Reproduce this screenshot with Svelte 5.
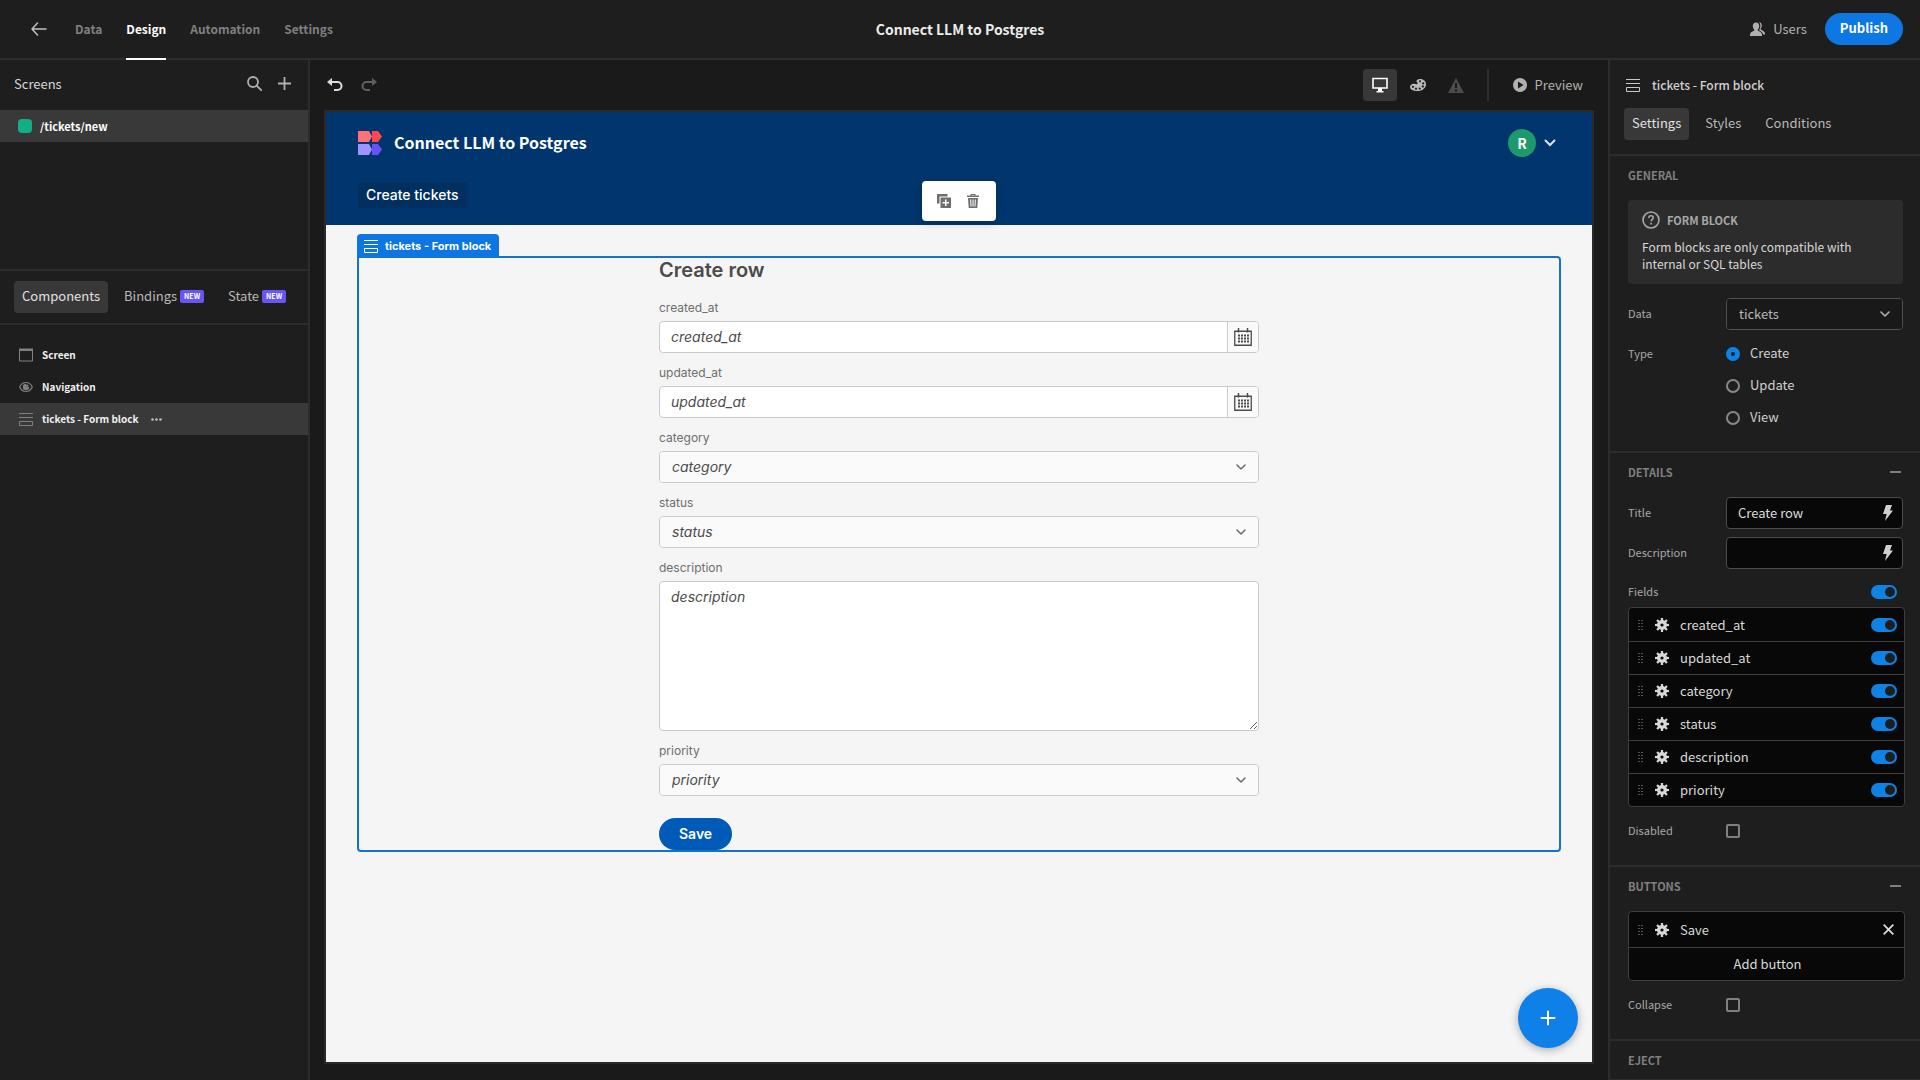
<script>
  const topTabs = ['Data', 'Design', 'Automation', 'Settings'];
  const settingTabs = ['Settings', 'Styles', 'Conditions'];
  const types = ['Create', 'Update', 'View'];
  const fields = ['created_at', 'updated_at', 'category', 'status', 'description', 'priority'];
  const formFields = [
    { name: 'created_at', kind: 'date' },
    { name: 'updated_at', kind: 'date' },
    { name: 'category', kind: 'select' },
    { name: 'status', kind: 'select' },
    { name: 'description', kind: 'long' },
    { name: 'priority', kind: 'select' }
  ];
  const teeth = [0, 45, 90, 135, 180, 225, 270, 315];
  const dotRows = [1, 4, 7, 10];

  let activeTop = $state('Design');
  let activeSetting = $state('Settings');
  let type = $state('Create');
  let title = $state('Create row');
  let enabled = $state(fields.map(() => true));
  let allEnabled = $state(true);
</script>

{#snippet formIcon()}
  <svg class="i14" viewBox="0 0 14 14" aria-hidden="true">
    <path d="M0 1.500h14M0 5.500h14M.5 9.500h13v4H.5z" fill="none" stroke="currentColor" />
  </svg>
{/snippet}

{#snippet gear()}
  <svg class="i14" viewBox="0 0 14 14" aria-hidden="true">
    <circle cx="7" cy="7" r="3.300" fill="none" stroke="currentColor" stroke-width="3.400" />
    {#each teeth as angle}
      <rect x="5.900" y="0" width="2.200" height="3" fill="currentColor" transform="rotate({angle} 7 7)" />
    {/each}
  </svg>
{/snippet}

{#snippet grip()}
  <svg class="grip" width="6" height="12" viewBox="0 0 6 12" aria-hidden="true">
    {#each dotRows as y}
      <rect x="0" {y} width="2" height="1" /><rect x="3" {y} width="2" height="1" />
    {/each}
  </svg>
{/snippet}

{#snippet chevron()}
  <svg class="chevron" width="10" height="7" viewBox="0 0 10 7" aria-hidden="true">
    <path d="M1 1l4 4 4-4" fill="none" stroke="currentColor" stroke-width="1.600" stroke-linecap="round" stroke-linejoin="round" />
  </svg>
{/snippet}

{#snippet bolt()}
  <svg width="10" height="16" viewBox="0 0 10 16" aria-hidden="true">
    <path d="M3 0h6L7 5.600h3L2 16l1.600-7H0z" fill="currentColor" />
  </svg>
{/snippet}

<div class="app">
  <header class="top">
    <nav class="top-nav" aria-label="Sections">
      <button class="back" aria-label="Back">
        <svg width="16" height="14" viewBox="0 0 16 14" fill="none" stroke="currentColor" stroke-width="1.500" stroke-linecap="round" stroke-linejoin="round"><path d="M6.500 1L1 7l5.500 6M1 7h14" /></svg>
      </button>
      {#each topTabs as tab}
        <button class="top-tab" class:active={activeTop === tab} onclick={() => (activeTop = tab)}>{tab}</button>
      {/each}
    </nav>
    <h1>Connect LLM to Postgres</h1>
    <div class="top-actions">
      <button class="users">
        <svg width="15" height="14" viewBox="0 0 15 14" fill="currentColor" aria-hidden="true">
          <path d="M6 .5c2.200 0 3.200 1.600 3.200 3.500 0 1.500-.6 2.700-1.400 3.500v1.200c1.600.5 4 1.700 4.200 3.600V14H0v-1.700c.2-1.900 2.600-3.100 4.200-3.600V7.500C3.400 6.700 2.800 5.500 2.800 4 2.800 2.100 3.800.5 6 .5z" />
          <path d="M9 0c1.900.2 2.800 1.700 2.800 3.400 0 1.300-.5 2.400-1.100 3.100v1C12 8 14 9 15 11v1.500h-1.700c-.6-2-2.200-3.200-4-4V7.600c.7-1 1.100-2.200 1.100-3.600C10.400 2.300 9.900.9 9 0z" />
        </svg>
        Users
      </button>
      <button class="publish">Publish</button>
    </div>
  </header>

  <div class="body">
    <aside class="left">
      <section class="screens">
        <div class="screens-head">
          <h2>Screens</h2>
          <button class="icon" aria-label="Search">
            <svg width="15" height="15" viewBox="0 0 15 15" fill="none" stroke="currentColor" stroke-width="1.800"><circle cx="6" cy="6" r="5" /><path d="M9.600 9.600l4.600 4.600" stroke-linecap="round" /></svg>
          </button>
          <button class="icon" aria-label="Add screen">
            <svg width="13" height="13" viewBox="0 0 13 13" stroke="currentColor" stroke-width="1.800"><path d="M6.500 0v13M0 6.500h13" /></svg>
          </button>
        </div>
        <a class="screen-row" href="#tickets-new"><span class="swatch"></span>/tickets/new</a>
      </section>
      <div class="left-tabs">
        <button class="pill active">Components</button>
        <button class="pill">Bindings <span class="new">NEW</span></button>
        <button class="pill">State <span class="new">NEW</span></button>
      </div>
      <ul class="tree">
        <li>
          <svg class="i14" viewBox="0 0 14 14" aria-hidden="true"><path d="M.5 1.500h13v11.500H.5z" fill="none" stroke="currentColor" /><path d="M0 .5h14v2.500H0z" fill="currentColor" /></svg>
          Screen
        </li>
        <li>
          <svg class="i14" viewBox="0 0 14 14" aria-hidden="true"><path d="M.7 7C2 4 4.200 2.500 7 2.500S12 4 13.300 7C12 10 9.800 11.500 7 11.500S2 10 .7 7z" fill="none" stroke="currentColor" stroke-width="1.200" /><path d="M7 3.800a3.200 3.200 0 1 0 3.200 3.200H7z" fill="currentColor" /><circle cx="8.200" cy="5.800" r="1.300" fill="currentColor" /></svg>
          Navigation
        </li>
        <li class="selected">
          {@render formIcon()}
          tickets - Form block
          <button class="more" aria-label="More actions"><svg width="11" height="3" viewBox="0 0 11 3" fill="currentColor"><circle cx="1.500" cy="1.500" r="1.300" /><circle cx="5.500" cy="1.500" r="1.300" /><circle cx="9.500" cy="1.500" r="1.300" /></svg></button>
        </li>
      </ul>
    </aside>

    <main class="center">
      <div class="toolbar">
        <button class="icon bright" aria-label="Undo">
          <svg width="16" height="14" viewBox="0 0 16 14"><path d="M4 4h6.500a4 4 0 0 1 0 8H7" fill="none" stroke="currentColor" stroke-width="2" /><path d="M5 0v8L0 4z" fill="currentColor" /></svg>
        </button>
        <button class="icon dim" aria-label="Redo">
          <svg width="16" height="14" viewBox="0 0 16 14"><path d="M12 4H5.500a4 4 0 0 0 0 8H9" fill="none" stroke="currentColor" stroke-width="2" /><path d="M11 0v8l5-4z" fill="currentColor" /></svg>
        </button>
        <span class="grow"></span>
        <button class="tool active" aria-label="Desktop view">
          <svg width="16" height="16" viewBox="0 0 16 16"><path d="M1 1.500h14v9.500H1z" fill="none" stroke="currentColor" stroke-width="1.600" /><path d="M6 11h4v3h1.500v1.500h-7V14H6z" fill="currentColor" /></svg>
        </button>
        <button class="tool" aria-label="Theme">
          <svg width="16" height="12" viewBox="0 0 16 12"><path fill="currentColor" fill-rule="evenodd" d="M6.500 1.800C7 .6 8.500 0 10.300 0 13.600 0 16 2.300 16 5.200 16 9 12.300 12 7.800 12 3.300 12 0 10.400 0 7.900 0 6 1.700 4.700 3.800 4.700c1.600 0 2.400.8 3.400.4 1-.4.3-1.400-.2-1.900-.4-.4-.7-.9-.5-1.400zM10 1.300a1 1 0 1 0 .01 0zM13.200 3.200a1.100 1.100 0 1 0 .01 0zM12.800 6.300a1.100 1.100 0 1 0 .01 0zM9.700 8.400a1.100 1.100 0 1 0 .01 0zM6 8.600a1.100 1.100 0 1 0 .01 0zM2.900 6.700a1.100 1.100 0 1 0 .01 0z" /></svg>
        </button>
        <button class="tool faint" aria-label="Errors">
          <svg width="16" height="15" viewBox="0 0 16 15"><path fill="currentColor" fill-rule="evenodd" d="M8 0l8 15H0zM7 5v5h2V5zM7 11.500v2h2v-2z" /></svg>
        </button>
        <span class="rule"></span>
        <button class="preview">
          <svg width="14" height="14" viewBox="0 0 14 14" aria-hidden="true"><path fill="currentColor" fill-rule="evenodd" d="M7 0a7 7 0 1 0 .01 0zM5 3.500v7L10.500 7z" /></svg>
          Preview
        </button>
      </div>

      <div class="canvas">
        <header class="app-head">
          <div class="brand">
            <svg width="24" height="24" viewBox="0 0 24 24" aria-hidden="true">
              <path d="M0 0h11l3 5.500L11 11H0z" fill="#ff7178" /><path d="M14 0h6l4 5.500-4 5.500h-6z" fill="#ff4751" />
              <path d="M0 13h11l3 5.500L11 24H0z" fill="#9f93ff" /><path d="M14 13h6l4 5.500-4 5.500h-6z" fill="#6753f5" />
            </svg>
            <h2>Connect LLM to Postgres</h2>
            <span class="grow"></span>
            <button class="account" aria-label="Account menu"><span class="avatar">R</span>
              <svg width="12" height="8" viewBox="0 0 12 8" aria-hidden="true"><path d="M1.500 1.500L6 6l4.500-4.500" fill="none" stroke="currentColor" stroke-width="2" stroke-linecap="round" /></svg>
            </button>
          </div>
          <a class="app-link" href="#create">Create tickets</a>
          <div class="float-bar">
            <button aria-label="Duplicate"><svg width="14" height="14" viewBox="0 0 14 14"><path d="M0 0h10.500v2.500h-8v7H0z" fill="currentColor" /><path fill="currentColor" fill-rule="evenodd" d="M3.500 3.500H14V14H3.500zM8 5.500v2.500H5.500v1.500H8V12h1.500V9.500H12V8H9.500V5.500z" /></svg></button>
            <button aria-label="Delete"><svg width="12" height="14" viewBox="0 0 12 14"><path fill="currentColor" fill-rule="evenodd" d="M0 1.500h3.500V0h5v1.500H12V3H0zM4.500 1v.5h3V1zM1 4h10l-.7 10H1.700zM3.200 5.500l.3 7h1l-.3-7zM5.500 5.500v7h1v-7zM7.800 5.500l-.3 7h1l.3-7z" /></svg></button>
          </div>
        </header>

        <div class="stage">
          <div class="selection">
            <span class="tag">{@render formIcon()}tickets - Form block</span>
            <form class="form" onsubmit={(e) => e.preventDefault()}>
              <h3>Create row</h3>
              {#each formFields as field}
                <div class="field">
                  <label for="f-{field.name}">{field.name}</label>
                  {#if field.kind === 'date'}
                    <div class="date">
                      <input id="f-{field.name}" type="text" placeholder={field.name} />
                      <button type="button" aria-label="Pick {field.name}">
                        <svg width="18" height="18" viewBox="0 0 18 18" aria-hidden="true">
                          <path d="M.75 3.250h16.500v14H.75z" fill="none" stroke="currentColor" stroke-width="1.300" />
                          <path d="M4.500 0v4.500M13.500 0v4.500" stroke="currentColor" stroke-width="1.500" />
                          <path d="M4 7.500h11M4 10.500h11M4 13.500h11" stroke="currentColor" stroke-width="2" stroke-dasharray="2 1" />
                        </svg>
                      </button>
                    </div>
                  {:else if field.kind === 'select'}
                    <div class="pick">
                      <select id="f-{field.name}"><option>{field.name}</option></select>
                      {@render chevron()}
                    </div>
                  {:else}
                    <textarea id="f-{field.name}" placeholder={field.name}></textarea>
                  {/if}
                </div>
              {/each}
              <button class="save">Save</button>
            </form>
          </div>
        </div>
        <button class="fab" aria-label="Add component">
          <svg width="16" height="16" viewBox="0 0 16 16" stroke="currentColor" stroke-width="2" stroke-linecap="round"><path d="M8 1.500v13M1.500 8h13" /></svg>
        </button>
      </div>
    </main>

    <aside class="right">
      <div class="right-head">
        <div class="right-title">{@render formIcon()}<h2>tickets - Form block</h2></div>
        <div class="right-tabs">
          {#each settingTabs as tab}
            <button class="pill" class:active={activeSetting === tab} onclick={() => (activeSetting = tab)}>{tab}</button>
          {/each}
        </div>
      </div>

      <section class="general">
        <h3>GENERAL</h3>
        <div class="info">
          <div class="info-head">
            <svg width="18" height="18" viewBox="0 0 18 18" fill="none" stroke="currentColor" stroke-width="1.600" aria-hidden="true"><circle cx="9" cy="9" r="8" /><path d="M6.800 7c0-1.300.9-2.200 2.200-2.200s2.200.8 2.200 2c0 1.500-2 1.700-2 3.400" /><path d="M9.100 11.700v1.800" /></svg>
            FORM BLOCK
          </div>
          <p>Form blocks are only compatible with internal or SQL tables</p>
        </div>
        <div class="prop">
          <label for="data">Data</label>
          <div class="pick dark"><select id="data"><option>tickets</option></select>{@render chevron()}</div>
        </div>
        <fieldset class="prop types">
          <legend>Type</legend>
          <div class="radios">
            {#each types as item}
              <label><input type="radio" name="type" value={item} bind:group={type} /><span>{item}</span></label>
            {/each}
          </div>
        </fieldset>
      </section>

      <section class="details">
        <div class="section-head"><h3>DETAILS</h3><button class="collapse" aria-label="Collapse details"></button></div>
        <div class="prop">
          <label for="title">Title</label>
          <div class="bound"><input id="title" type="text" bind:value={title} /><button aria-label="Bind title">{@render bolt()}</button></div>
        </div>
        <div class="prop">
          <label for="desc">Description</label>
          <div class="bound"><input id="desc" type="text" /><button aria-label="Bind description">{@render bolt()}</button></div>
        </div>
        <div class="fields-head">
          <label for="all">Fields</label>
          <input id="all" class="switch" type="checkbox" bind:checked={allEnabled} />
        </div>
        <ul class="list">
          {#each fields as name, i}
            <li>{@render grip()}{@render gear()}<label for="on-{name}">{name}</label><input id="on-{name}" class="switch" type="checkbox" bind:checked={enabled[i]} /></li>
          {/each}
        </ul>
        <div class="prop check"><label for="disabled">Disabled</label><input id="disabled" type="checkbox" /></div>
      </section>

      <section class="buttons">
        <div class="section-head"><h3>BUTTONS</h3><button class="collapse" aria-label="Collapse buttons"></button></div>
        <ul class="list">
          <li class="tall">{@render grip()}{@render gear()}<span class="name">Save</span>
            <button class="remove" aria-label="Remove Save"><svg width="11" height="11" viewBox="0 0 11 11" stroke="currentColor" stroke-width="1.800"><path d="M.7.7l9.600 9.600M10.300.7L.7 10.300" /></svg></button>
          </li>
          <li><button class="add">Add button</button></li>
        </ul>
        <div class="prop check"><label for="collapse">Collapse</label><input id="collapse" type="checkbox" /></div>
      </section>

      <section class="eject"><h3>EJECT</h3></section>
    </aside>
  </div>
</div>

<style>
  :global(body) { background: #1e1e1e; }
  .app, .app * { box-sizing: border-box; }
  .app {
    height: 100vh;
    display: flex;
    flex-direction: column;
    overflow: hidden;
    background: #1e1e1e;
    color: #c8c8c8;
    font: 13px/18px "Noto Sans CJK JP", "Open Sans", sans-serif;
  }
  h1, h2, h3, p, ul { margin: 0; padding: 0; font-size: inherit; line-height: inherit; }
  ul { list-style: none; }
  button, input, select, textarea { font: inherit; color: inherit; margin: 0; }
  button { background: none; border: 0; padding: 0; cursor: pointer; display: inline-flex; align-items: center; justify-content: center; }
  a { color: inherit; text-decoration: none; }
  svg { flex: none; display: block; }
  .i14 { width: 14px; height: 14px; }
  .grow { flex: 1; }

  .top { flex: none; height: 60px; border-bottom: 2px solid #2c2c2c; display: grid; grid-template-columns: 1fr auto 1fr; }
  .top h1 { align-self: center; font-size: 14px; color: #ececec; }
  .top-nav { display: flex; gap: 24px; padding-left: 31px; }
  .back { width: 16px; margin-right: 4px; color: #c0c0c0; }
  .top-tab { position: relative; font-size: 12px; font-weight: 700; color: #808080; }
  .top-tab.active { color: #fff; }
  .top-tab.active::after { content: ""; position: absolute; left: 0; right: 0; bottom: -2px; height: 2px; background: #fff; }
  .top-actions { display: flex; justify-content: flex-end; align-items: center; gap: 18px; padding-right: 17px; }
  .users { gap: 8px; color: #b0b0b0; }
  .publish { height: 32px; padding: 0 15px 2px; border-radius: 16px; background: #0d77e4; color: #fff; font-weight: 700; }

  .body { flex: 1; min-height: 0; display: grid; grid-template-columns: 310px minmax(0, 1fr) 312px; }
  .left { border-right: 2px solid #2c2c2c; }
  .screens { min-height: 211px; border-bottom: 2px solid #2c2c2c; }
  .screens-head { height: 50px; display: flex; align-items: center; padding: 0 17px 3px 14px; gap: 16px; }
  .screens-head h2 { flex: 1; font-weight: 400; color: #d8d8d8; }
  .icon { color: #b0b0b0; }
  .screen-row { display: flex; align-items: center; gap: 8px; height: 32px; padding-left: 18px; background: #393939; color: #fff; font-size: 11px; font-weight: 700; }
  .swatch { width: 14px; height: 14px; border-radius: 4px; background: #12ae86; }
  .left-tabs { display: flex; align-items: center; height: 54px; padding-left: 14px; gap: 8px; border-bottom: 2px solid #2c2c2c; }
  .pill { height: 32px; padding: 0 8px 2px; border-radius: 4px; color: #b8b8b8; gap: 3px; }
  .pill.active { background: #383838; color: #e0e0e0; }
  .new { background: #6a55f2; color: #fff; border-radius: 2px; font-size: 7px; line-height: 13px; font-weight: 700; padding: 0 4px; }
  .tree { padding-top: 14px; font-size: 10px; font-weight: 700; color: #f0f0f0; }
  .tree li { display: flex; align-items: center; gap: 9px; height: 32px; padding-left: 19px; }
  .tree .i14 { color: #808080; }
  .tree .selected { background: #393939; }
  .more { margin-left: 3px; color: #c0c0c0; height: 16px; }

  .center { display: flex; flex-direction: column; padding: 0 14px 16px; background: #1a1a1a; min-width: 0; }
  .toolbar { flex: none; height: 50px; display: flex; align-items: center; padding: 0 11px 0 3px; color: #b0b0b0; }
  .toolbar .icon { margin-right: 18px; }
  .toolbar .bright { color: #dcdcdc; }
  .toolbar .dim { color: #606060; }
  .tool { width: 34px; height: 32px; border-radius: 4px; margin-right: 4px; color: #b8b8b8; }
  .tool.active { background: #383838; color: #fff; }
  .tool.faint { color: #4c4c4c; }
  .rule { width: 2px; height: 32px; margin: 0 24px 0 10px; background: #2e2e2e; }
  .preview { gap: 8px; }
  .canvas { position: relative; flex: 1; min-height: 0; border: 2px solid #2a2a2a; background: #f5f5f5; }
  .app-head { position: relative; height: 113px; padding: 15px 32px 0; background: #00366d; color: #fff; }
  .brand { display: flex; align-items: center; gap: 12px; height: 32px; }
  .brand h2 { font-size: 16px; line-height: 24px; padding-bottom: 2px; }
  .account { gap: 8px; color: #d8e4f0; padding-right: 4px; }
  .avatar { width: 28px; height: 28px; border-radius: 50%; background: #1d9a6c; color: #fff; font-size: 14px; line-height: 28px; font-weight: 700; }
  .app-link { display: inline-block; margin-top: 23px; padding: 0 8px; border-radius: 4px; background: #002f60; font: 500 14px/26px Inter, sans-serif; }
  .float-bar { position: absolute; left: calc(50% - 37px); top: 69px; width: 74px; height: 40px; padding-right: 2px; border-radius: 4px; background: #fff; color: #6e6e6e; display: flex; align-items: center; justify-content: center; gap: 16px; box-shadow: 0 2px 8px rgba(0, 0, 0, .2); }

  .stage { padding: 31px 31px 0; }
  .selection { position: relative; border: 2px solid #1473c8; border-radius: 0 4px 4px 4px; }
  .tag { position: absolute; left: -2px; top: -24px; height: 24px; display: flex; align-items: center; gap: 7px; padding: 0 8px 0 7px; border-radius: 4px 4px 0 0; background: #0d76e3; color: #fff; font: 700 11px/24px Inter, sans-serif; }
  .form { width: 600px; max-width: 100%; margin: 0 auto; font-family: Inter, sans-serif; display: flex; flex-direction: column; gap: 8px; }
  .form h3 { font-size: 20px; line-height: 24px; height: 30px; font-weight: 600; color: #4b4b4b; }
  .field { display: flex; flex-direction: column; }
  .field > label { height: 25px; padding-top: 4px; font-size: 12px; line-height: 16px; color: #6e6e6e; }
  .date, .form .pick { height: 32px; border: 1px solid #cacaca; border-radius: 4px; overflow: hidden; }
  .date { display: flex; background: #fff; }
  .date input { flex: 1; border: 0; padding: 0 11px; background: none; font-size: 14px; min-width: 0; }
  .date input::placeholder, textarea::placeholder { color: #4b4b4b; font-style: italic; opacity: 1; }
  .date button { width: 31px; border-left: 1px solid #cacaca; background: #fafafa; color: #4b4b4b; }
  .pick { position: relative; display: flex; }
  .pick select { flex: 1; appearance: none; border: 0; background: #fafafa; padding: 0 12px; font-size: 14px; font-style: italic; color: #4b4b4b; }
  .pick .chevron { position: absolute; right: 12px; top: calc(50% - 3px); color: #6e6e6e; pointer-events: none; }
  textarea { height: 150px; border: 1px solid #cacaca; border-radius: 4px; background: #fff; padding: 5px 11px; font-size: 14px; line-height: 20px; }
  .save { align-self: flex-start; margin-top: 14px; height: 32px; padding: 0 20px; border-radius: 16px; background: #005bb8; color: #fff; font-size: 14px; font-weight: 600; }
  .fab { position: absolute; right: 14px; bottom: 14px; width: 60px; height: 60px; border-radius: 50%; background: #0f80e8; color: #fff; box-shadow: 0 2px 8px rgba(0, 0, 0, .3); }

  .right { border-left: 2px solid #2c2c2c; overflow: hidden; }
  .right-head { height: 96px; border-bottom: 2px solid #2c2c2c; }
  .right-title { display: flex; align-items: center; gap: 12px; height: 48px; padding: 2px 16px 0; }
  .right-title h2 { font-size: 12px; font-weight: 500; color: #d0d0d0; }
  .right-tabs { display: flex; gap: 8px; padding-left: 14px; }
  .general, .details, .buttons, .eject { padding: 0 17px 0 18px; border-bottom: 2px solid #2c2c2c; }
  .right h3 { font-size: 11px; line-height: 38px; font-weight: 700; color: #808080; }
  .general { height: 297px; }
  .info { margin-top: 6px; height: 84px; padding: 10px 14px; border-radius: 4px; background: #2c2c2c; color: #d8d8d8; }
  .info-head { display: flex; align-items: center; gap: 7px; height: 20px; margin-bottom: 8px; font-size: 11px; font-weight: 700; color: #a8a8a8; }
  .info p { font-size: 12px; line-height: 17px; }
  .prop { display: grid; grid-template-columns: 98px minmax(0, 1fr); align-items: center; min-height: 32px; margin: 0 0 8px; padding: 0; border: 0; }
  .prop > label, legend, .fields-head label { font-size: 11px; padding-bottom: 2px; color: #a8a8a8; }
  .info + .prop { margin-top: 14px; }
  .dark { height: 32px; border: 1px solid #505050; border-radius: 4px; overflow: hidden; }
  .dark select { font-size: 13px; font-style: normal; color: #b8b8b8; background: #191919; }
  .dark .chevron { color: #b0b0b0; }
  .types { align-items: start; }
  legend { float: left; padding: 0; line-height: 30px; }
  .radios label { display: flex; align-items: center; gap: 10px; height: 32px; color: #d0d0d0; }
  .radios span { padding-bottom: 2px; }
  .radios input { appearance: none; width: 14px; height: 14px; border: 2px solid #888; border-radius: 50%; }
  .radios input:checked { border: 5px solid #0f82e6; }
  .section-head { display: flex; align-items: center; justify-content: space-between; }
  .collapse { width: 15px; height: 16px; }
  .collapse::after { content: ""; width: 11px; height: 2px; background: #808080; }
  .details { height: 414px; }
  .details .section-head { margin-bottom: 6px; }
  .bound { display: flex; align-items: center; height: 32px; padding-right: 9px; border: 1px solid #4c4c4c; border-radius: 4px; background: #080808; }
  .bound input { flex: 1; min-width: 0; border: 0; background: none; padding: 0 11px; color: #dcdcdc; }
  .bound button { color: #d0d0d0; }
  .fields-head { display: flex; align-items: center; justify-content: space-between; height: 30px; padding-right: 6px; }
  .switch { appearance: none; width: 26px; height: 14px; border-radius: 7px; background: #5a5a5a; display: flex; align-items: center; padding: 0 2px; }
  .switch::before { content: ""; width: 10px; height: 10px; border-radius: 50%; background: #1e1e1e; }
  .switch:checked { background: #0f82e6; justify-content: flex-end; }
  .list { border: 1px solid #3e3e3e; border-radius: 4px; background: #080808; margin-right: -2px; }
  .list li { display: flex; align-items: center; min-height: 33px; padding: 0 7px 0 9px; }
  .list li + li { border-top: 1px solid #3e3e3e; }
  .list label, .list .name { flex: 1; margin-left: 11px; color: #d8d8d8; }
  .list .i14 { margin-left: 11px; color: #d8d8d8; }
  .grip { fill: #505050; }
  .list .tall { min-height: 35px; }
  .remove { color: #d8d8d8; padding-right: 3px; }
  .add { flex: 1; color: #d8d8d8; }
  .check { margin-top: 8px; }
  .check input { appearance: none; width: 14px; height: 14px; border: 2px solid #808080; border-radius: 2px; }
  .buttons { height: 174px; }
  .buttons .list { margin-top: 6px; }
</style>
